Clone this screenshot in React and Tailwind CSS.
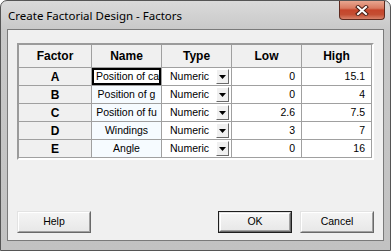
import React from 'react';

const rows = [
  { factor: 'A', name: 'Position of ca', low: '0', high: '15.1', focused: true },
  { factor: 'B', name: 'Position of g', low: '0', high: '4' },
  { factor: 'C', name: 'Position of fu', low: '2.6', high: '7.5' },
  { factor: 'D', name: 'Windings', low: '3', high: '7' },
  { factor: 'E', name: 'Angle', low: '0', high: '16' },
];

function CloseButton() {
  return (
    <div className="mr-[5px] flex h-[19px] w-[46px] items-center justify-center rounded-b-[4px] border border-t-0 border-[#5e2a1f] bg-[linear-gradient(180deg,#e8a690_0%,#d97a60_40%,#c5452b_50%,#c44e33_75%,#d7826a_100%)]">
      <svg width="14" height="11" viewBox="0 0 14 11">
        <path d="M3 2 L11 9 M11 2 L3 9" stroke="#4a1f16" strokeWidth="4" strokeLinecap="square" fill="none" />
        <path d="M3 2 L11 9 M11 2 L3 9" stroke="#ffffff" strokeWidth="2" strokeLinecap="square" fill="none" />
      </svg>
    </div>
  );
}

function DropArrow() {
  return (
    <div className="mr-[2px] flex h-[15px] w-[13px] items-center justify-center border border-t-[#ffffff] border-l-[#ffffff] border-r-[#696969] border-b-[#696969] bg-[#f0f0f0]">
      <svg width="7" height="4" viewBox="0 0 7 4">
        <path d="M0 0 H7 L3.5 4 Z" fill="#000" />
      </svg>
    </div>
  );
}

function DialogButton({ children, isDefault }) {
  return (
    <div className={`h-[22px] w-[74px] ${isDefault ? 'border border-[#1e1e1e]' : ''}`}>
      <div className="h-full w-full border border-t-[#e3e3e3] border-l-[#e3e3e3] border-r-[#696969] border-b-[#696969]">
        <div className="flex h-full w-full items-center justify-center border border-t-[#ffffff] border-l-[#ffffff] border-r-[#a0a0a0] border-b-[#a0a0a0] bg-[linear-gradient(180deg,#f4f4f4,#e8e8e8)] text-[10.5px] text-black">
          {children}
        </div>
      </div>
    </div>
  );
}

export default function App() {
  return (
    <div className="h-[251px] w-[391px] font-['Liberation_Sans',Arial,sans-serif]">
      <div className="flex h-full w-full flex-col rounded-t-[7px] border border-[#555555] bg-[linear-gradient(180deg,#dadada_0%,#c8c8c8_12%,#c2c2c2_100%)]">
        <div className="flex h-[28px] items-start justify-between">
          <div className="pl-[7px] pt-[6px] font-['Noto_Sans',sans-serif] text-[11.5px] text-black">
            Create Factorial Design - Factors
          </div>
          <CloseButton />
        </div>

        <div className="mx-[6px] flex h-[212px] flex-col border border-[#7a7a7a] bg-[#f0f0f0] px-[9px] pt-[13px]">
          <div className="w-[357px] border-2 border-t-[#9b9b9b] border-l-[#9b9b9b] border-r-[#ffffff] border-b-[#ffffff]">
            <div className="grid grid-cols-[72px_69px_69px_69px_69px] gap-px bg-[#a0a0a0] pb-px pr-px text-[10.5px] text-black">
              {['Factor', 'Name', 'Type', 'Low', 'High'].map((h) => (
                <div key={h} className="flex h-[22px] items-center justify-center bg-[#f0f0f0] text-[12px] font-bold">
                  {h}
                </div>
              ))}
              {rows.map((r) => (
                <React.Fragment key={r.factor}>
                  <div className="flex h-[17px] items-center justify-center bg-[#f0f0f0] text-[12px] font-bold">
                    {r.factor}
                  </div>
                  {r.focused ? (
                    <div className="flex h-[17px] items-center overflow-hidden whitespace-nowrap border-2 border-black bg-white pl-[2px]">
                      {r.name}
                    </div>
                  ) : (
                    <div className="flex h-[17px] items-center justify-center overflow-hidden whitespace-nowrap bg-[#f6fbff]">
                      {r.name}
                    </div>
                  )}
                  <div className="flex h-[17px] items-center justify-between bg-white pl-[8px]">
                    <span>Numeric</span>
                    <DropArrow />
                  </div>
                  <div className="flex h-[17px] items-center justify-end bg-white pr-[6px]">{r.low}</div>
                  <div className="flex h-[17px] items-center justify-end bg-white pr-[6px]">{r.high}</div>
                </React.Fragment>
              ))}
            </div>
          </div>

          <div className="mt-[51px] flex items-center">
            <DialogButton>Help</DialogButton>
            <div className="flex-1" />
            <DialogButton isDefault>OK</DialogButton>
            <div className="w-[8px]" />
            <DialogButton>Cancel</DialogButton>
          </div>
        </div>
      </div>
    </div>
  );
}
